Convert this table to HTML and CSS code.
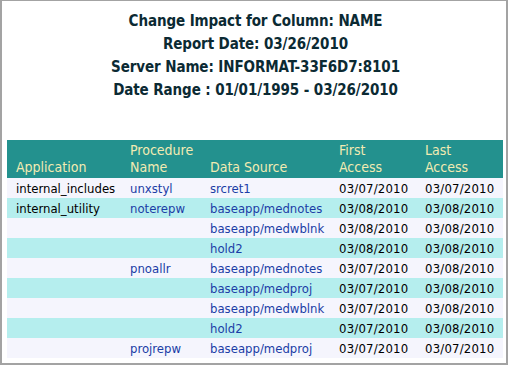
FILE: index.html
```html
<!DOCTYPE html>
<html lang="en">
  <head>
    <meta charset="utf-8" />
    <title>Change Impact for Column: NAME</title>
    <link rel="stylesheet" href="styles.css">
  </head>
  <body>
    <div class="frame">
      <header class="report-head">
        <div>Change Impact for Column: NAME</div>
        <div>Report Date: 03/26/2010</div>
        <div>Server Name: INFORMAT-33F6D7:8101</div>
        <div>Date Range : 01/01/1995 - 03/26/2010</div>
      </header>

      <table class="impact">
        <colgroup>
          <col class="c-app" />
          <col class="c-proc" />
          <col class="c-src" />
          <col class="c-first" />
          <col class="c-last" />
        </colgroup>
        <thead>
          <tr>
            <th>Application</th>
            <th>Procedure<br />Name</th>
            <th>Data Source</th>
            <th>First<br />Access</th>
            <th>Last<br />Access</th>
          </tr>
        </thead>
        <tbody>
          <tr>
            <td>internal_includes</td>
            <td class="link">unxstyl</td>
            <td class="link">srcret1</td>
            <td class="date">03/07/2010</td>
            <td class="date">03/07/2010</td>
          </tr>
          <tr>
            <td>internal_utility</td>
            <td class="link">noterepw</td>
            <td class="link">baseapp/mednotes</td>
            <td class="date">03/08/2010</td>
            <td class="date">03/08/2010</td>
          </tr>
          <tr>
            <td></td>
            <td></td>
            <td class="link">baseapp/medwblnk</td>
            <td class="date">03/08/2010</td>
            <td class="date">03/08/2010</td>
          </tr>
          <tr>
            <td></td>
            <td></td>
            <td class="link">hold2</td>
            <td class="date">03/08/2010</td>
            <td class="date">03/08/2010</td>
          </tr>
          <tr>
            <td></td>
            <td class="link">pnoallr</td>
            <td class="link">baseapp/mednotes</td>
            <td class="date">03/07/2010</td>
            <td class="date">03/08/2010</td>
          </tr>
          <tr>
            <td></td>
            <td></td>
            <td class="link">baseapp/medproj</td>
            <td class="date">03/07/2010</td>
            <td class="date">03/08/2010</td>
          </tr>
          <tr>
            <td></td>
            <td></td>
            <td class="link">baseapp/medwblnk</td>
            <td class="date">03/07/2010</td>
            <td class="date">03/08/2010</td>
          </tr>
          <tr>
            <td></td>
            <td></td>
            <td class="link">hold2</td>
            <td class="date">03/07/2010</td>
            <td class="date">03/08/2010</td>
          </tr>
          <tr>
            <td></td>
            <td class="link">projrepw</td>
            <td class="link">baseapp/medproj</td>
            <td class="date">03/07/2010</td>
            <td class="date">03/07/2010</td>
          </tr>
        </tbody>
      </table>
    </div>
  </body>
</html>
```

FILE: styles.css
```css
:root {
  --frame-border: #a3a3a3;
  --title-color: #0b2a33;
  --head-bg: #23918e;
  --head-text: #f2ebb2;
  --row-odd: #f5f5fd;
  --row-even: #b5eeee;
  --link-color: #1b3da6;
  --font-main: "DejaVu Sans Condensed", "DejaVu Sans", sans-serif;
}

*,
*::before,
*::after {
  box-sizing: border-box;
}

html,
body {
  margin: 0;
  height: 100%;
  background: #ffffff;
  font-family: var(--font-main);
}

.frame {
  height: 365px;
  border-top: 1px solid var(--frame-border);
  border-left: 2px solid var(--frame-border);
  border-right: 2px solid var(--frame-border);
  border-bottom: 2px solid var(--frame-border);
  padding: 9px 2px 0 5px;
}

.report-head {
  text-align: center;
  font-size: 15px;
  font-weight: bold;
  line-height: 23px;
  letter-spacing: -0.1px;
  color: var(--title-color);
  margin-bottom: 38px;
}

.impact {
  width: 496px;
  table-layout: fixed;
  border-collapse: collapse;
  font-size: 13px;
}

.c-app { width: 114px; }
.c-proc { width: 80px; }
.c-src { width: 129px; }
.c-first { width: 86px; }
.c-last { width: 87px; }

.impact th {
  background: var(--head-bg);
  color: var(--head-text);
  font-weight: normal;
  font-size: 14px;
  line-height: 17px;
  text-align: left;
  vertical-align: bottom;
  padding: 2px 0 2px 9px;
}

.impact td {
  height: 20px;
  padding: 0 0 0 9px;
  white-space: nowrap;
  color: #000000;
}

.impact td.date {
  letter-spacing: 0.2px;
}

.impact tbody tr:nth-child(odd) {
  background: var(--row-odd);
}

.impact tbody tr:nth-child(even) {
  background: var(--row-even);
}

.impact td.link {
  color: var(--link-color);
}
```
